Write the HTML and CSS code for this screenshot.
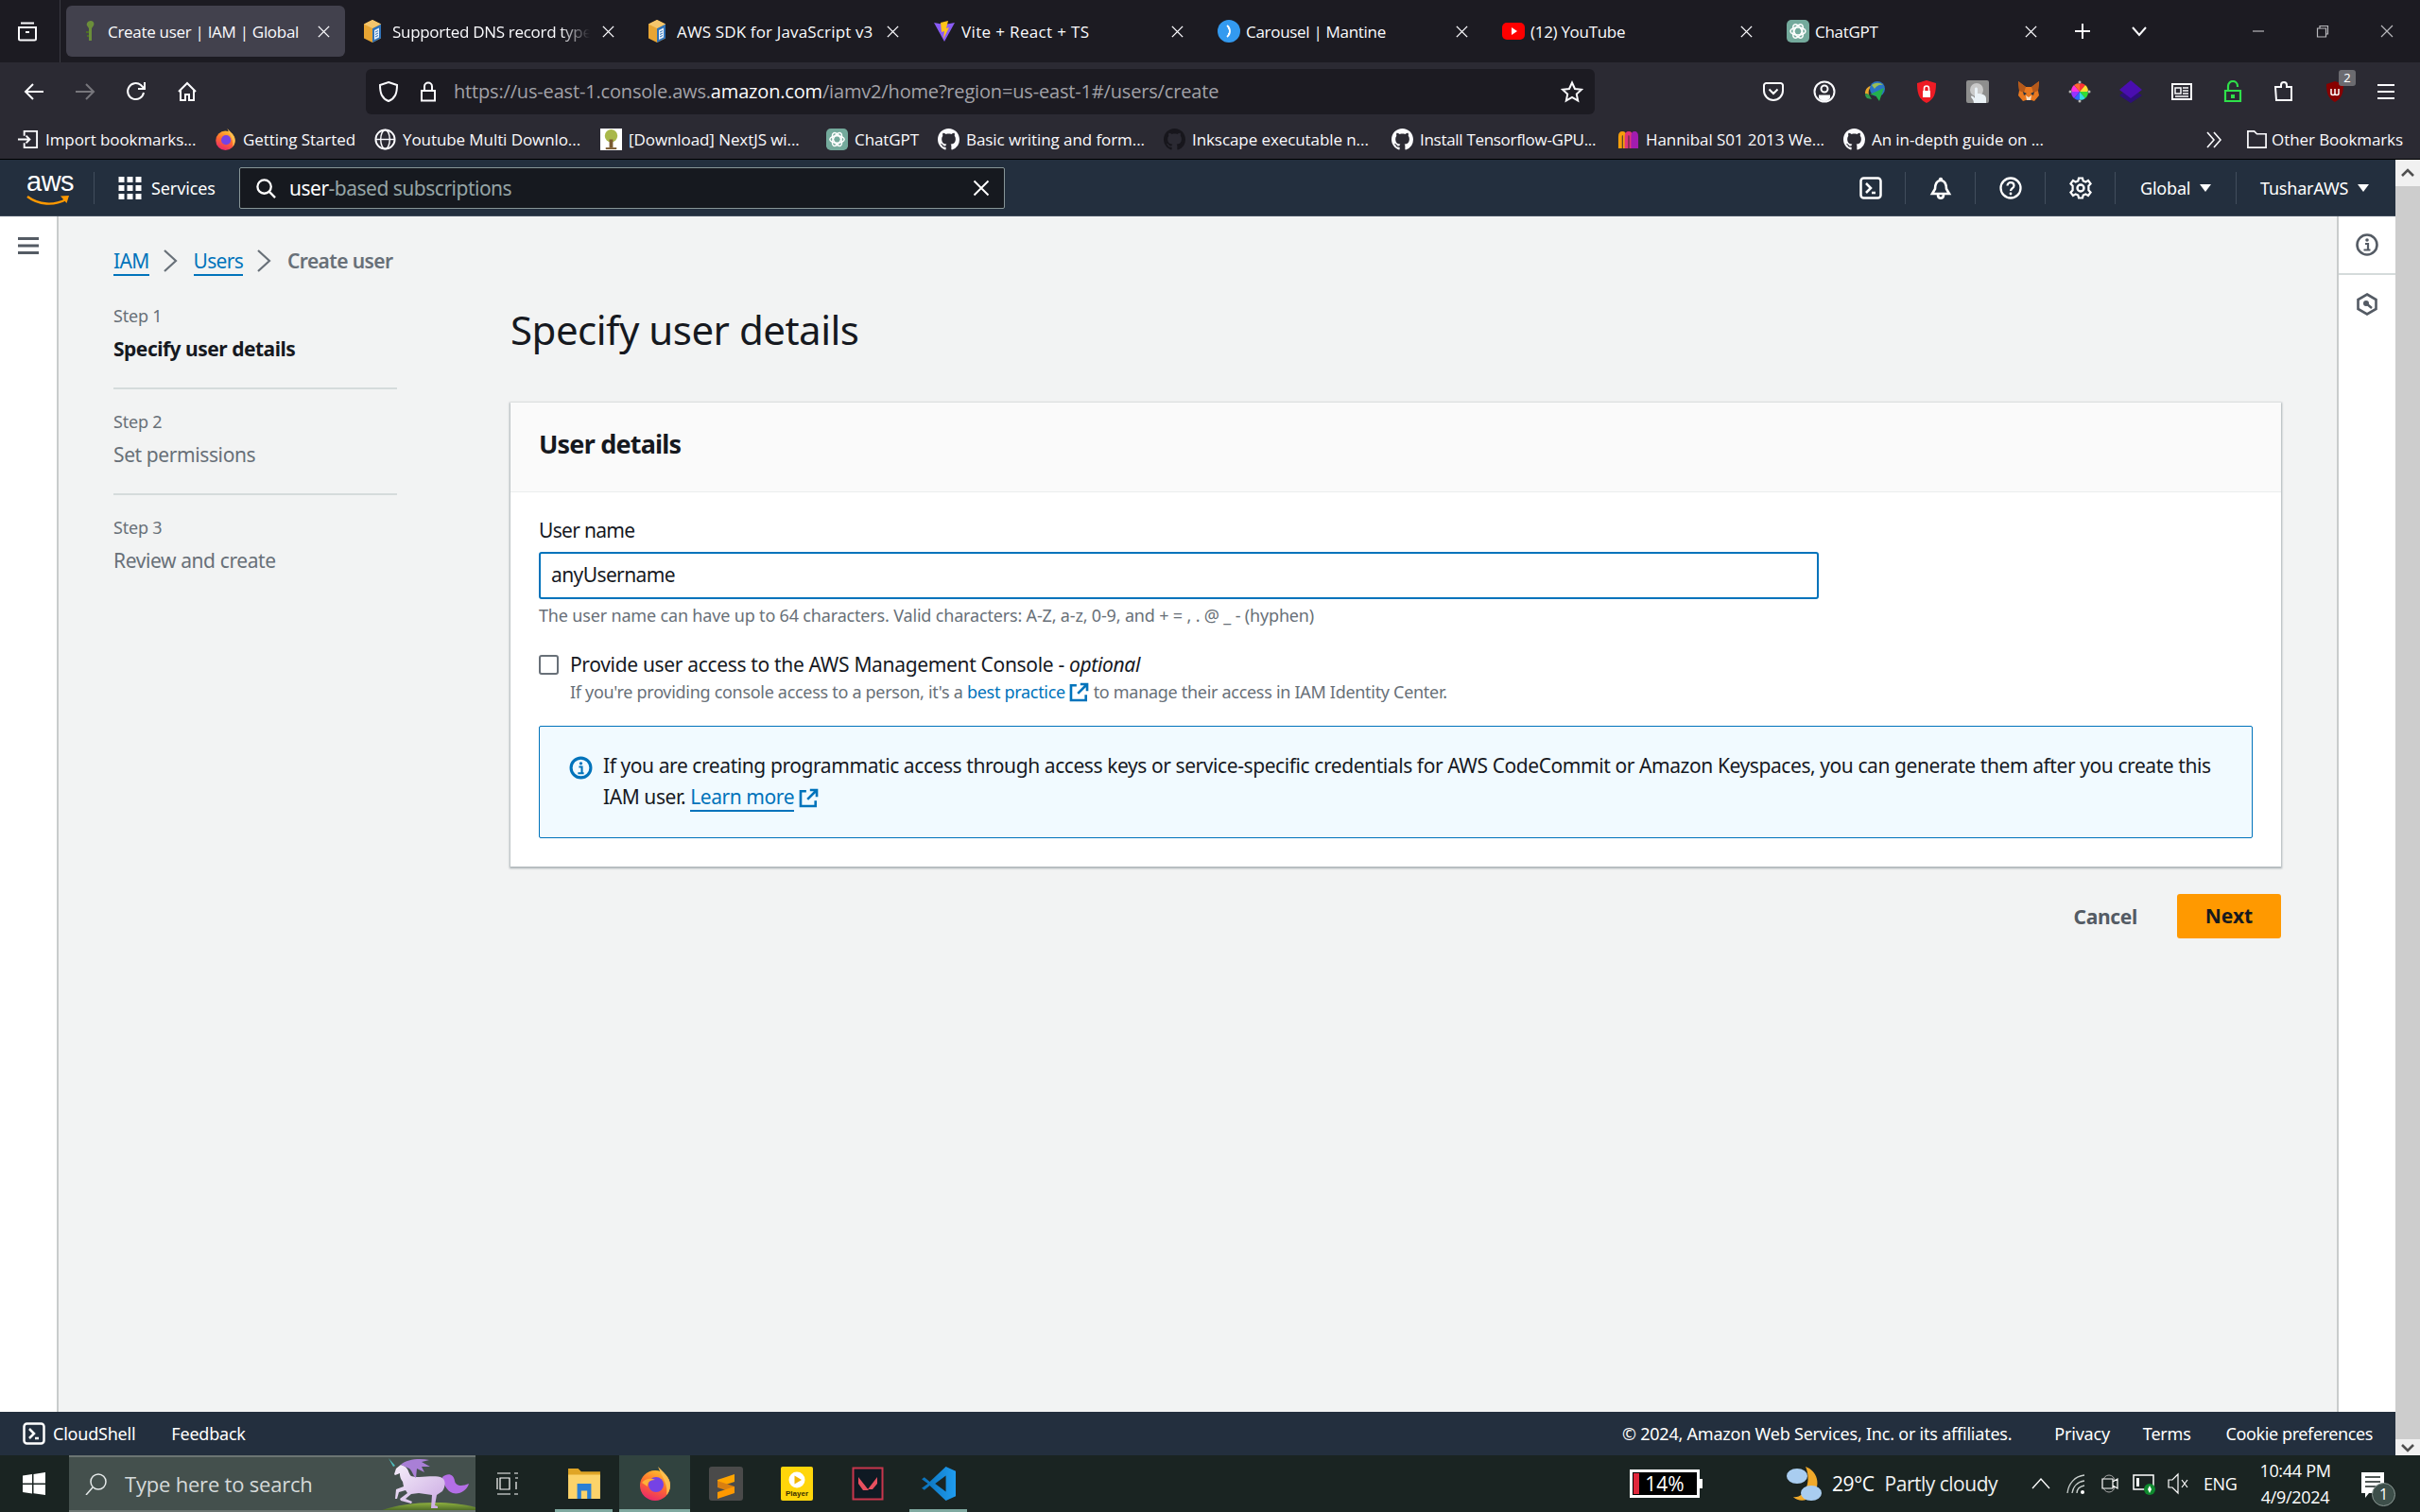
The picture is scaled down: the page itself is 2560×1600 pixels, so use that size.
FILE: index.html
```html
<!DOCTYPE html>
<html lang="en">
<head>
<meta charset="utf-8">
<title>Create user | IAM | Global</title>
<link rel="stylesheet" href="styles.css">
</head>
<body>
<svg class="defs" aria-hidden="true">
  <defs>
    <linearGradient id="fxg" x1="0.7" y1="0" x2="0.3" y2="1"><stop offset="0" stop-color="#ffc02e"/><stop offset=".5" stop-color="#ff6a2f"/><stop offset="1" stop-color="#e8246e"/></linearGradient>
    <linearGradient id="hill" x1="0" y1="0" x2="0" y2="1"><stop offset="0" stop-color="#8fb23f"/><stop offset="1" stop-color="#3e5a22"/></linearGradient>
    <linearGradient id="uni" x1="0" y1="0" x2="1" y2="1"><stop offset="0" stop-color="#f6eefa"/><stop offset="1" stop-color="#c9a8e2"/></linearGradient>
    <linearGradient id="vs" x1="0" y1="0" x2="1" y2="0"><stop offset="0" stop-color="#0a70b8"/><stop offset="1" stop-color="#1f9cf0"/></linearGradient>
  </defs>
  <symbol id="x" viewBox="0 0 16 16"><path d="M2 2l12 12M14 2L2 14" fill="none" stroke="currentColor" stroke-width="1.5"/></symbol>
  <symbol id="box" viewBox="0 0 24 24"><path d="M12 0l9 4.500v15L12 24l-9-4.500v-15z" fill="#e8a533"/><path d="M12 9l9-4.500v15L12 24z" fill="#2f72b8"/><path d="M14 11l5-2.500v10L14 21z" fill="#e9f1fa"/><path d="M15 13l3-1.500M15 15.500l3-1.500M15 18l3-1.500" stroke="#2f72b8" stroke-width="1"/><path d="M12 0l9 4.500L12 9 3 4.500z" fill="#f5c66c"/></symbol>
  <symbol id="gpt" viewBox="0 0 24 24"><rect width="24" height="24" rx="5" fill="#74aa9c"/><g fill="none" stroke="#fff" stroke-width="1.5"><ellipse cx="12" cy="12" rx="8" ry="4"/><ellipse cx="12" cy="12" rx="8" ry="4" transform="rotate(60 12 12)"/><ellipse cx="12" cy="12" rx="8" ry="4" transform="rotate(120 12 12)"/></g></symbol>
  <symbol id="gh" viewBox="0 0 16 16"><path fill="currentColor" d="M8 0C3.58 0 0 3.58 0 8c0 3.54 2.29 6.53 5.47 7.59.4.07.55-.17.55-.38 0-.19-.01-.82-.01-1.49-2.01.37-2.53-.49-2.69-.94-.09-.23-.48-.94-.82-1.13-.28-.15-.68-.52-.01-.53.63-.01 1.08.58 1.23.82.72 1.21 1.87.87 2.33.66.07-.52.28-.87.51-1.07-1.78-.2-3.64-.89-3.64-3.95 0-.87.31-1.59.82-2.15-.08-.2-.36-1.02.08-2.12 0 0 .67-.21 2.2.82.64-.18 1.32-.27 2-.27s1.36.09 2 .27c1.53-1.04 2.2-.82 2.2-.82.44 1.1.16 1.92.08 2.12.51.56.82 1.27.82 2.15 0 3.07-1.87 3.75-3.65 3.95.29.25.54.73.54 1.48 0 1.07-.01 1.93-.01 2.2 0 .21.15.46.55.38A8.013 8.013 0 0 0 16 8c0-4.42-3.58-8-8-8z"/></symbol>
  <symbol id="ext" viewBox="0 0 16 16"><path d="M9 1.500h5.500V7M14.500 1.500L7 9M6 2.500H1.500v12h12V10" fill="none" stroke="currentColor" stroke-width="2"/></symbol>
  <symbol id="shell" viewBox="0 0 24 24"><rect x="1.500" y="1.500" width="21" height="21" rx="3" fill="none" stroke="currentColor" stroke-width="2.500"/><path d="M7 7l5 5-5 5M13 17h4" fill="none" stroke="currentColor" stroke-width="2.500"/></symbol>
  <symbol id="caret" viewBox="0 0 12 10"><path d="M0 1h12L6 9z" fill="currentColor"/></symbol>
  <symbol id="chev" viewBox="0 0 16 24"><path d="M2 1l12 11L2 23" fill="none" stroke="#687078" stroke-width="2.200"/></symbol>
</svg>

<div class="screen">
  <header class="tabstrip">
    <div class="tabs-menu"><svg class="ico24" viewBox="0 0 24 24"><path d="M5 3.500h14M3 8h18v12a1.500 1.500 0 0 1-1.500 1.500h-15A1.500 1.500 0 0 1 3 20zM10 13h4" fill="none" stroke="#fbfbfe" stroke-width="2"/></svg></div>
    <div class="tab active">
      <svg class="ico24" viewBox="0 0 24 24"><path d="M12 1c3 0 4 3 3 5l-2 3v13h-3V9L8 6c-1-2 1-5 4-5z" fill="#6b8e3a"/><path d="M10 13h-3M10 17H8" stroke="#4c6d24" stroke-width="2"/></svg>
      <span class="tab-title">Create user | IAM | Global</span><svg class="tab-x"><use href="#x"/></svg>
    </div>
    <div class="tab">
      <svg class="ico24 shift-l"><use href="#box"/></svg>
      <span class="tab-title fade">Supported DNS record types</span><svg class="tab-x"><use href="#x"/></svg>
    </div>
    <div class="tab">
      <svg class="ico24 shift-l"><use href="#box"/></svg>
      <span class="tab-title loose">AWS SDK for JavaScript v3</span><svg class="tab-x"><use href="#x"/></svg>
    </div>
    <div class="tab">
      <svg class="ico24" viewBox="0 0 24 24"><path d="M1 3l11 2 11-2-11 20z" fill="#8a5cf6"/><path d="M8 3l8-2-2 8 3-1-6 12 1-8-3 1z" fill="#ffc517"/></svg>
      <span class="tab-title looser">Vite + React + TS</span><svg class="tab-x"><use href="#x"/></svg>
    </div>
    <div class="tab">
      <svg class="ico24" viewBox="0 0 24 24"><circle cx="12" cy="12" r="12" fill="#339af0"/><path d="M10 6c4 3 4 9 0 12M13 9h-2M13 15h-2" fill="none" stroke="#fff" stroke-width="1.800"/></svg>
      <span class="tab-title">Carousel | Mantine</span><svg class="tab-x"><use href="#x"/></svg>
    </div>
    <div class="tab">
      <svg class="ico24" viewBox="0 0 24 24"><rect y="3" width="24" height="18" rx="5" fill="#f00"/><path d="M10 8l6 4-6 4z" fill="#fff"/></svg>
      <span class="tab-title">(12) YouTube</span><svg class="tab-x"><use href="#x"/></svg>
    </div>
    <div class="tab">
      <svg class="ico24"><use href="#gpt"/></svg>
      <span class="tab-title">ChatGPT</span><svg class="tab-x"><use href="#x"/></svg>
    </div>
    <div class="tab-actions">
      <svg class="ico20" viewBox="0 0 20 20"><path d="M10 2v16M2 10h16" stroke="#fbfbfe" stroke-width="2"/></svg>
      <svg class="ico20" viewBox="0 0 20 20"><path d="M3 6l7 8 7-8" fill="none" stroke="#fbfbfe" stroke-width="2"/></svg>
    </div>
    <div class="win-buttons">
      <svg class="win-ico" viewBox="0 0 16 16"><path d="M2 8h12" stroke="#b9b9bd" stroke-width="1.200"/></svg>
      <svg class="win-ico" viewBox="0 0 16 16"><path d="M2.500 5h9v9h-9zM5 5V2.500h8.500V11H11.500" fill="none" stroke="#b9b9bd" stroke-width="1.200"/></svg>
      <svg class="win-ico" viewBox="0 0 16 16"><path d="M2 2l12 12M14 2L2 14" stroke="#b9b9bd" stroke-width="1.200"/></svg>
    </div>
  </header>

  <nav class="toolbar">
    <div class="tool"><svg class="ico24" viewBox="0 0 24 24"><path d="M22 12H3M11 4l-8 8 8 8" fill="none" stroke="#fbfbfe" stroke-width="2"/></svg></div>
    <div class="tool"><svg class="ico24" viewBox="0 0 24 24"><path d="M2 12h19M13 4l8 8-8 8" fill="none" stroke="#77767c" stroke-width="2"/></svg></div>
    <div class="tool"><svg class="ico24" viewBox="0 0 24 24"><path d="M20 13a8.500 8.500 0 1 1-3-8l3 3M21 2v7h-7" fill="none" stroke="#fbfbfe" stroke-width="2"/></svg></div>
    <div class="tool"><svg class="ico24" viewBox="0 0 24 24"><path d="M3 12l9-9 9 9M5 10v11h5v-6h4v6h5V10" fill="none" stroke="#fbfbfe" stroke-width="2"/></svg></div>
    <div class="urlbar">
      <svg class="ico24 shield" viewBox="0 0 24 24"><path d="M12 2l9 3c0 9-2 14-9 17C5 19 3 14 3 5z" fill="none" stroke="#fbfbfe" stroke-width="2"/></svg>
      <svg class="ico24 lock" viewBox="0 0 24 24"><path d="M5 11h14v10.500H5zM8 11V6.500a4 4 0 0 1 8 0V11" fill="none" stroke="#fbfbfe" stroke-width="2"/></svg>
      <span class="url">https://us-east-1.console.aws.<b>amazon.com</b>/iamv2/home?region=us-east-1#/users/create</span>
      <svg class="ico24 star" viewBox="0 0 24 24"><path d="M12 2.500l3 6.500 7 .8-5.200 4.800 1.400 7L12 18l-6.200 3.600 1.400-7L2 9.800 9 9z" fill="none" stroke="#fbfbfe" stroke-width="2"/></svg>
    </div>
    <div class="extensions">
      <div class="tool"><svg class="ico24" viewBox="0 0 24 24"><path d="M4 3h16a2.500 2.500 0 0 1 2 2v6a10 10 0 0 1-20 0V5a2.500 2.500 0 0 1 2-2zM7.500 9.500L12 14l4.500-4.500" fill="none" stroke="#fbfbfe" stroke-width="2"/></svg></div>
      <div class="tool"><svg class="ico24" viewBox="0 0 24 24"><circle cx="12" cy="12" r="10.500" fill="none" stroke="#fbfbfe" stroke-width="2"/><circle cx="12" cy="9" r="3.500" fill="none" stroke="#fbfbfe" stroke-width="2"/><path d="M6 15.500h12v3a7 7 0 0 1-12 0z" fill="#fbfbfe"/></svg></div>
      <div class="tool"><svg class="ico24" viewBox="0 0 24 24"><path d="M1 14c0-6 5-9 9-8-4 1-6 4-5 9z" fill="#e8a52a"/><path d="M3 19c-2-2-2-4-2-5l4 1 3 5z" fill="#2f9b4c"/><circle cx="14" cy="9" r="8" fill="#2a74c4"/><path d="M8 5c4-3 9-3 12 0-4-1-7 1-9 4z" fill="#9bbf55"/><path d="M21 8l-5 14-4-6-6-1z" fill="#23b14d"/></svg></div>
      <div class="tool"><svg class="ico24" viewBox="0 0 24 24"><path d="M12 0l10 3c0 11-2 17-10 21C4 20 2 14 2 3z" fill="#ee1c25"/><path d="M8 11h8v7H8z" fill="#fff"/><path d="M9.500 11V8.500a2.500 2.500 0 0 1 5 0V11" fill="none" stroke="#fff" stroke-width="1.600"/></svg></div>
      <div class="tool"><svg class="ico24" viewBox="0 0 24 24"><rect width="24" height="24" rx="2" fill="#8e8e8e"/><circle cx="11" cy="10" r="7" fill="#c9c9c9"/><path d="M8 24c0-4-3-5-3-7 1-1 3 0 4 2V9c0-2 3-2 3 0v5c4 0 9 1 9 5v5z" fill="#eaf1f6"/></svg></div>
      <div class="tool"><svg class="ico24" viewBox="0 0 24 24"><path d="M1 1l8 6h6l8-6-1 10 1 5-5 6-3-1h-6l-3 1-5-6 1-5z" fill="#e8781f"/><path d="M1 1l8 6-2 6-5-2zM23 1l-8 6 2 6 5-2z" fill="#b5591a"/><path d="M9 16l3 2 3-2-1 5h-4z" fill="#f5e0c8"/><path d="M6 12l4 2-3 2zM18 12l-4 2 3 2z" fill="#233447"/></svg></div>
      <div class="tool"><svg class="ico24" viewBox="0 0 24 24"><path d="M12 12V3a9 9 0 0 1 6 2z" fill="#f33"/><path d="M12 12l6-7a9 9 0 0 1 3 7z" fill="#fd3"/><path d="M12 12h9a9 9 0 0 1-3 7z" fill="#3d3"/><path d="M12 12l6 7a9 9 0 0 1-6 2z" fill="#3dd"/><path d="M12 12v9a9 9 0 0 1-6-2z" fill="#36f"/><path d="M12 12l-6 7a9 9 0 0 1-3-7z" fill="#93f"/><path d="M12 12H3a9 9 0 0 1 3-7z" fill="#f3d"/><path d="M12 12L6 5a9 9 0 0 1 6-2z" fill="#f63"/><g fill="#cfcfcf" stroke="#555" stroke-width=".6"><circle cx="12" cy="2" r="1.500"/><circle cx="12" cy="22" r="1.500"/><circle cx="2" cy="12" r="1.500"/><circle cx="22" cy="12" r="1.500"/></g></svg></div>
      <div class="tool"><svg class="ico24" viewBox="0 0 24 24"><path d="M12 24l-12-8 4-3 8 5 8-5 4 3z" fill="#2d0f78"/><path d="M12 0l12 10-12 9L0 10z" fill="#4a0eb0"/></svg></div>
      <div class="tool"><svg class="ico24" viewBox="0 0 24 24"><path d="M2 4h20v16H2z" fill="none" stroke="#fbfbfe" stroke-width="2"/><path d="M5 8h6v6H5zM13 8h6M13 11h6M13 14h6M5 17h14" fill="none" stroke="#fbfbfe" stroke-width="1.500"/></svg></div>
      <div class="tool"><svg class="ico24" viewBox="0 0 24 24"><path d="M4 11h16v11H4zM7 11V6a5 5 0 0 1 10 0v1" fill="none" stroke="#2fe04a" stroke-width="2.200"/><path d="M10 15h4v4h-4z" fill="#2fe04a"/></svg></div>
      <div class="tool"><svg class="ico24" viewBox="0 0 24 24"><path d="M3 7h6V5a3 3 0 0 1 6 0v2h5v14H4z" fill="none" stroke="#fbfbfe" stroke-width="2"/></svg></div>
      <div class="tool badge-host"><svg class="ico24" viewBox="0 0 24 24"><path d="M12 1l9 3c0 10-2 15-9 19C5 19 3 14 3 4z" fill="#800"/><path d="M8 9v5c0 2 4 2 4 0 0 2 4 2 4 0V9M12 9v5" fill="none" stroke="#fff" stroke-width="1.500"/></svg><span class="ext-badge">2</span></div>
      <div class="tool"><svg class="ico24" viewBox="0 0 24 24"><path d="M3 5h18M3 12h18M3 19h18" stroke="#fbfbfe" stroke-width="2"/></svg></div>
    </div>
  </nav>

  <div class="bookmarks">
    <div class="bm"><svg class="ico22" viewBox="0 0 24 24"><path d="M8 8V3h14v18H8v-5M1 12h13M10 8l4 4-4 4" fill="none" stroke="#fbfbfe" stroke-width="2"/></svg><span class="bm-t w160">Import bookmarks...</span></div>
    <div class="bm"><svg class="ico22" viewBox="0 0 34 36"><circle cx="17" cy="20" r="16" fill="url(#fxg)"/><path d="M20 0c6 6 13 12 13 20 0 4-2 8-4 10 2-10-3-16-9-30z" fill="#ffbd4f"/><circle cx="18" cy="19" r="8" fill="#7542e5"/></svg><span class="bm-t w120">Getting Started</span></div>
    <div class="bm"><svg class="ico22" viewBox="0 0 24 24"><circle cx="12" cy="12" r="10.500" fill="none" stroke="#fbfbfe" stroke-width="2"/><ellipse cx="12" cy="12" rx="5" ry="10.500" fill="none" stroke="#fbfbfe" stroke-width="1.500"/><path d="M2 12h20" stroke="#fbfbfe" stroke-width="1.500"/></svg><span class="bm-t w190">Youtube Multi Downlo...</span></div>
    <div class="bm"><svg class="ico22" viewBox="0 0 24 24"><rect width="24" height="24" fill="#fff"/><circle cx="12" cy="8" r="7" fill="#a9b84a"/><path d="M10 12h4v9h-4z" fill="#7a5a30"/><path d="M6 21h12v2H6z" fill="#7a5a30"/></svg><span class="bm-t w190">[Download] NextJS wi...</span></div>
    <div class="bm"><svg class="ico22"><use href="#gpt"/></svg><span class="bm-t w69">ChatGPT</span></div>
    <div class="bm"><svg class="ico22 gh-light"><use href="#gh"/></svg><span class="bm-t w190">Basic writing and form...</span></div>
    <div class="bm"><svg class="ico22 gh-dark"><use href="#gh"/></svg><span class="bm-t w192">Inkscape executable n...</span></div>
    <div class="bm"><svg class="ico22 gh-light"><use href="#gh"/></svg><span class="bm-t w190 tight">Install Tensorflow-GPU...</span></div>
    <div class="bm"><svg class="ico22" viewBox="0 0 24 24"><path d="M3 22V9c0-5 5-5 5 0v13" fill="none" stroke="#f59e0b" stroke-width="4"/><path d="M10 22V9c0-5 5-5 5 0v13" fill="none" stroke="#e0337a" stroke-width="4"/><path d="M17 22V9c0-5 4-5 4 0v13" fill="none" stroke="#a21caf" stroke-width="4"/></svg><span class="bm-t w190">Hannibal S01 2013 We...</span></div>
    <div class="bm"><svg class="ico22 gh-light"><use href="#gh"/></svg><span class="bm-t w190">An in-depth guide on ...</span></div>
    <div class="bm-end">
      <svg class="ico20" viewBox="0 0 20 20"><path d="M3 2l7 8-7 8M10 2l7 8-7 8" fill="none" stroke="#fbfbfe" stroke-width="1.600"/></svg>
      <div class="bm other"><svg class="ico22" viewBox="0 0 24 24"><path d="M2 3h7l3 3h10v15H2z" fill="none" stroke="#fbfbfe" stroke-width="1.800"/></svg><span>Other Bookmarks</span></div>
    </div>
  </div>

  <div class="viewport">
    <div class="console">
      <div class="awsnav">
        <div class="aws-logo"><span class="aws-word">aws</span><svg class="aws-smile" viewBox="0 0 46 12"><path d="M1 2c12 9 28 10 41 3" fill="none" stroke="#f90" stroke-width="2.400"/><path d="M36 1.500l9-.5-2.500 8z" fill="#f90"/></svg></div>
        <span class="nav-sep first"></span>
        <div class="services"><svg class="grid-ico" viewBox="0 0 24 24"><path fill="#fff" d="M0 0h6v6H0zM9 0h6v6H9zM18 0h6v6h-6zM0 9h6v6H0zM9 9h6v6H9zM18 9h6v6h-6zM0 18h6v6H0zM9 18h6v6H9zM18 18h6v6h-6z"/></svg><span>Services</span></div>
        <div class="aws-search">
          <svg class="ico22" viewBox="0 0 24 24"><circle cx="10" cy="10" r="7.500" fill="none" stroke="#fff" stroke-width="2.400"/><path d="M15 15l7 7" stroke="#fff" stroke-width="2.400"/></svg>
          <span class="search-text"><b>user</b>-based subscriptions</span>
          <svg class="search-x"><use href="#x"/></svg>
        </div>
        <div class="nav-right">
          <div class="nav-ico"><svg class="ico24"><use href="#shell"/></svg></div>
          <div class="nav-ico"><svg class="ico24" viewBox="0 0 24 24"><path d="M12 2c-1 0-1 1-1 2-4 1-5 5-5 9l-3 5h18l-3-5c0-4-1-8-5-9 0-1 0-2-1-2zM9 19c0 5 6 5 6 0" fill="none" stroke="#fff" stroke-width="2.600"/></svg></div>
          <div class="nav-ico"><svg class="ico24" viewBox="0 0 24 24"><circle cx="12" cy="12" r="10.500" fill="none" stroke="#fff" stroke-width="2.300"/><path d="M8.500 9.500c0-4.500 7-4.500 7 0 0 3-3.500 2.500-3.500 5.500" fill="none" stroke="#fff" stroke-width="2.200"/><circle cx="12" cy="18" r="1.400" fill="#fff"/></svg></div>
          <div class="nav-ico"><svg class="ico24" viewBox="0 0 24 24"><circle cx="12" cy="12" r="3.500" fill="none" stroke="#fff" stroke-width="2.400"/><path d="M10 1.500h4l.7 3 2.600 1.100 2.700-1.600 2.600 3.400-2.200 2.200v4.800l2.200 2.200-2.600 3.400-2.700-1.600-2.600 1.100-.7 3h-4l-.7-3-2.600-1.100L4 20l-2.600-3.400 2.200-2.200V9.600L1.400 7.400 4 4l2.700 1.600 2.600-1.100z" fill="none" stroke="#fff" stroke-width="2.200"/></svg></div>
          <div class="nav-menu global"><span>Global</span><svg class="caret"><use href="#caret"/></svg></div>
          <div class="nav-menu user"><span>TusharAWS</span><svg class="caret"><use href="#caret"/></svg></div>
        </div>
      </div>

      <div class="workspace">
        <aside class="left-rail">
          <svg class="burger" viewBox="0 0 22 18"><path d="M0 1.500h22M0 9h22M0 16.500h22" stroke="#545b64" stroke-width="3"/></svg>
        </aside>
        <main class="content">
          <div class="crumbs">
            <a class="crumb-link">IAM</a><svg class="crumb-chev"><use href="#chev"/></svg>
            <a class="crumb-link">Users</a><svg class="crumb-chev"><use href="#chev"/></svg>
            <span class="crumb-now">Create user</span>
          </div>
          <div class="wizard">
            <ol class="steps">
              <li class="step"><small>Step 1</small><strong>Specify user details</strong></li>
              <li class="step"><small>Step 2</small><span>Set permissions</span></li>
              <li class="step last"><small>Step 3</small><span>Review and create</span></li>
            </ol>
            <section class="form-col">
              <h1>Specify user details</h1>
              <div class="card">
                <div class="card-head"><h2>User details</h2></div>
                <div class="card-body">
                  <label class="field-label">User name</label>
                  <div class="input">anyUsername</div>
                  <p class="hint">The user name can have up to 64 characters. Valid characters: A-Z, a-z, 0-9, and + = , . @ _ - (hyphen)</p>
                  <div class="check-row">
                    <span class="checkbox"></span>
                    <div>
                      <div class="check-label">Provide user access to the AWS Management Console - <em>optional</em></div>
                      <div class="check-sub">If you're providing console access to a person, it's a <a class="sub-link">best practice</a> <svg class="ext"><use href="#ext"/></svg> to manage their access in IAM Identity Center.</div>
                    </div>
                  </div>
                  <div class="flash">
                    <svg class="flash-ico" viewBox="0 0 24 24"><circle cx="12" cy="12" r="10" fill="none" stroke="#0073bb" stroke-width="3"/><path d="M10 11h3v6M9 17.500h6" fill="none" stroke="#0073bb" stroke-width="2"/><circle cx="12" cy="7.500" r="1.600" fill="#0073bb"/></svg>
                    <p>If you are creating programmatic access through access keys or service-specific credentials for AWS CodeCommit or Amazon Keyspaces, you can generate them after you create this IAM user. <a class="learn">Learn more</a> <svg class="ext wide"><use href="#ext"/></svg></p>
                  </div>
                </div>
              </div>
              <div class="actions">
                <span class="cancel">Cancel</span>
                <span class="next">Next</span>
              </div>
            </section>
          </div>
        </main>
        <aside class="right-rail">
          <div class="rail-cell"><svg class="ico24" viewBox="0 0 24 24"><circle cx="12" cy="12" r="10.500" fill="none" stroke="#545b64" stroke-width="2.600"/><path d="M10 11h3v6M8.500 17.500h7" fill="none" stroke="#545b64" stroke-width="2.200"/><circle cx="12" cy="7" r="1.800" fill="#545b64"/></svg></div>
          <div class="rail-cell"><svg class="ico24" viewBox="0 0 24 24"><path d="M12 1.500l9.500 5.500v10L12 22.500 2.500 17V7z" fill="none" stroke="#545b64" stroke-width="2.600"/><circle cx="11" cy="11" r="3" fill="#545b64"/><path d="M11 11l6 5" stroke="#545b64" stroke-width="2.400"/></svg></div>
        </aside>
      </div>

      <footer class="aws-footer">
        <svg class="ico24"><use href="#shell"/></svg>
        <span class="foot-shell">CloudShell</span>
        <span class="foot-feedback">Feedback</span>
        <span class="foot-copy">© 2024, Amazon Web Services, Inc. or its affiliates.</span>
        <span class="foot-privacy">Privacy</span>
        <span class="foot-terms">Terms</span>
        <span class="foot-cookie">Cookie preferences</span>
      </footer>
    </div>
    <div class="scrollbar">
      <div class="sb-btn top"><svg class="sb-ico" viewBox="0 0 16 10"><path d="M2 8l6-6 6 6" fill="none" stroke="#505050" stroke-width="2.600"/></svg></div>
      <div class="sb-btn bottom"><svg class="sb-ico" viewBox="0 0 16 10"><path d="M2 2l6 6 6-6" fill="none" stroke="#505050" stroke-width="2.600"/></svg></div>
    </div>
  </div>

  <div class="taskbar">
    <svg class="win-logo" viewBox="0 0 24 24"><path fill="#fff" d="M0 3.500l10-1.400V11.500H0zM11.500 1.900L24 0v11.500H11.500zM0 13h10v9.400L0 21zM11.500 13H24v11l-12.500-1.800z"/></svg>
    <div class="task-search">
      <svg class="ico24" viewBox="0 0 24 24"><circle cx="14" cy="10" r="8" fill="none" stroke="#e6eaea" stroke-width="1.500"/><path d="M8 16l-7 8" stroke="#e6eaea" stroke-width="1.500"/></svg>
      <span>Type here to search</span>
      <svg class="unicorn" viewBox="3 2 100 56">
        <path d="M0 60c20-10 70-14 103-5v5z" fill="url(#hill)"/>
        <path d="M11 3l7 8-2 1z" fill="#4fc0c0"/>
        <path d="M68 23c6-5 12-3 13 4 1 6 8 6 15 3-2 7-10 12-17 10-6-2-10-9-11-17z" fill="#b46fe6"/>
        <path d="M17 20l2-6 5-4 3 1c6 3 5 9 8 11 10 3 24-2 33 2 4 3 3 10 0 14l-6 4-2 11 3 1v2h-7l1-14-14-2-8 1-6 5 7 3-1 2-11-3-1-2 8-6-2-3-7 2-2 7h-2l1-10 8-3-1-5c-3-4-3-7-3-9l-5 2z" fill="url(#uni)"/>
        <path d="M24 10c6-6 20-7 30-5l-8 2 9 5-9 0 3 6-8-4-1 10c-3-2-4-8-7-10z" fill="#a97fd6"/>
      </svg>
    </div>
    <div class="task-apps">
      <div class="task-app viewer"><svg class="ico24" viewBox="0 0 24 24"><path d="M1 1h14M1 23h14M4 6h10v12H4zM1 6v12M19 1h4M19 23h4M20 6h3M21 10v8" fill="none" stroke="#fff" stroke-width="1.200"/></svg></div>
      <div class="task-app running"><svg class="app-ico" viewBox="0 0 32 34"><path d="M0 2h10l3 3h19v6H0z" fill="#e0a526"/><path d="M0 8h32v24H0z" fill="#fcd36a"/><path d="M9 32V17h14v15h-4v-8h-6v8z" fill="#2a7fd5"/></svg></div>
      <div class="task-app selected"><svg class="app-ico" viewBox="0 0 34 36"><circle cx="17" cy="20" r="16" fill="url(#fxg)"/><path d="M20 0c6 6 13 12 13 20 0 4-2 8-4 10 2-10-3-16-9-30z" fill="#ffbd4f"/><circle cx="18" cy="19" r="8" fill="#7542e5"/><path d="M3 17c4-5 10-5 14-3-6 0-8 3-8 7z" fill="#ffb03a"/></svg></div>
      <div class="task-app"><svg class="app-big" viewBox="0 0 36 36"><rect width="36" height="36" rx="3" fill="#4a4a4a"/><path d="M27 8L9 14v8l18-6z" fill="#ffa500"/><path d="M9 15l18 6v7L9 22z" fill="#d97f10"/><path d="M27 21L9 27v7l18-6z" fill="#ff9800"/></svg></div>
      <div class="task-app"><svg class="app-big" viewBox="0 0 36 36"><rect x="1" width="34" height="36" rx="2" fill="#ffd60a"/><circle cx="18" cy="14" r="8.500" fill="#fff"/><path d="M15.500 9.500l7.500 4.500-7.500 4.500z" fill="#f2b705"/><text class="player-word" x="18" y="31" text-anchor="middle">Player</text></svg></div>
      <div class="task-app"><svg class="app-big" viewBox="0 0 34 36"><path d="M1.500 1.500h31v33h-31z" fill="#0f1923" stroke="#c8364c" stroke-width="2"/><path d="M7 11l11 14h-6L7 18zM27 11v7l-5 6h-5z" fill="#e8505f"/></svg></div>
      <div class="task-app running"><svg class="app-big" viewBox="0 0 38 38"><path d="M27 0l11 5v28l-11 5L9 21l-6 5-3-2 7-5-7-5 3-2 6 5z" fill="url(#vs)"/><path d="M27 10L15 19l12 9z" fill="#1a2422"/></svg></div>
    </div>
    <div class="tray">
      <div class="battery"><span class="batt-level"></span><span class="batt-text">14%</span></div>
      <svg class="weather" viewBox="0 0 38 40"><path d="M20 2c12 4 18 20 6 32-6 5-14 5-19 0 12 2 20-16 13-32z" fill="#f0a92a"/><ellipse cx="11" cy="12" rx="11" ry="8" fill="#a9cdf0"/><ellipse cx="26" cy="30" rx="11" ry="8" fill="#a9cdf0"/></svg>
      <span class="temp">29°C</span><span class="cond">Partly cloudy</span>
      <svg class="tray-ico caret-up" viewBox="0 0 20 14"><path d="M1 12l9-10 9 10" fill="none" stroke="#fff" stroke-width="1.300"/></svg>
      <svg class="tray-ico wifi" viewBox="0 0 20 24"><path d="M1 22C2 12 9 4 19 3M6 22c1-7 6-12 13-13M11 22c0-4 3-7 8-8" fill="none" stroke="#c9cfcd" stroke-width="1.300"/><circle cx="17" cy="21" r="2" fill="#fff"/></svg>
      <svg class="tray-ico meet" viewBox="0 0 18 26"><rect x="2" y="4" width="12" height="18" rx="6" fill="none" stroke="#aaa" stroke-width="1"/><path d="M1 8h11v10H1zM12 11l5-3v10l-5-3" fill="#1a2422" stroke="#fff" stroke-width="1.200"/></svg>
      <div class="power"><svg class="tray-ico power-ico" viewBox="0 0 24 24"><path d="M1 3h21v15H1z" fill="none" stroke="#fff" stroke-width="1.500"/><path d="M4 6h3v9H4z" fill="#fff"/><circle cx="18" cy="18" r="6" fill="#0f8a2e"/><path d="M18 14v8M16 18l2-4 2 4-2 4z" fill="#fff"/></svg></div>
      <svg class="tray-ico vol" viewBox="0 0 22 24"><path d="M1 8h4l6-6v20l-6-6H1z" fill="none" stroke="#fff" stroke-width="1.200"/><path d="M15 8l6 8M21 8l-6 8" stroke="#fff" stroke-width="1.200"/></svg>
      <span class="lang">ENG</span>
      <div class="clock"><span>10:44 PM</span><span>4/9/2024</span></div>
      <div class="notif"><svg class="notif-ico" viewBox="0 0 26 30"><path d="M1 1h24v22H9l-4 5v-5H1z" fill="#fff"/><path d="M5 6h16M5 11h16M5 16h12" stroke="#1a2422" stroke-width="1.500"/></svg><span class="notif-count">1</span></div>
    </div>
  </div>
</div>
</body>
</html>
```
FILE: styles.css
```css
* { box-sizing: border-box; }
html, body { margin: 0; padding: 0; background: #1c1b22; }
.defs { display: block; width: 0; height: 0; overflow: hidden; }
.screen { width: 2560px; height: 1600px; display: flex; flex-direction: column; overflow: hidden; font-family: "Noto Sans", sans-serif; color: #16191f; }
.ico24 { width: 24px; height: 24px; flex: none; display: block; }
.ico22 { width: 23px; height: 23px; flex: none; display: block; }
.ico20 { width: 20px; height: 20px; flex: none; display: block; }

/* Tabs */
.tabstrip { height: 66px; background: #1c1b22; display: flex; align-items: center; color: #fbfbfe; flex: none; }
.tabs-menu { width: 64px; height: 66px; padding-left: 17px; display: flex; align-items: center; border-right: 1px solid #3a3a42; margin-right: 6px; }
.tab { width: 295px; height: 54px; margin-right: 6px; padding-left: 14px; border-radius: 6px; display: flex; align-items: center; flex: none; position: relative; }
.tab.active { background: #42414d; }
.shift-l { margin-left: -3px; margin-right: 3px; }
.tab-title { margin-left: 6px; width: 209px; white-space: nowrap; overflow: hidden; font-family: "Open Sans", sans-serif; font-size: 17px; letter-spacing: -0.3px; }
.tab-title.loose { letter-spacing: 0.15px; }
.tab-title.looser { letter-spacing: 0.35px; }
.tab-title.fade { -webkit-mask-image: linear-gradient(90deg, #000 85%, transparent); mask-image: linear-gradient(90deg, #000 85%, transparent); }
.tab-x { width: 15px; height: 15px; margin-left: 12px; flex: none; color: #fbfbfe; }
.tab-actions { display: flex; gap: 40px; margin-left: 16px; }
.win-buttons { display: flex; margin-left: auto; margin-right: 27px; gap: 52px; }
.win-ico { width: 16px; height: 16px; }

/* Toolbar */
.toolbar { height: 61px; background: #2b2a33; display: flex; align-items: center; padding-left: 9px; flex: none; }
.tool { width: 54px; height: 48px; display: flex; align-items: center; justify-content: center; flex: none; position: relative; }
.urlbar { width: 1300px; height: 48px; margin-left: 162px; background: #1c1b22; border-radius: 6px; display: flex; align-items: center; padding-left: 12px; color: #fbfbfe; }
.shield { margin-right: 18px; }
.lock { margin-right: 15px; }
.url { font-family: "Open Sans", sans-serif; font-size: 20px; color: #a2a2a8; white-space: nowrap; letter-spacing: -0.17px; }
.url b { color: #fbfbfe; font-weight: 400; }
.star { margin-left: auto; margin-right: 12px; }
.extensions { display: flex; margin-left: 162px; }
.ext-badge { position: absolute; top: 1px; right: 5px; width: 18px; height: 17px; border-radius: 3px; background: #6b6b70; color: #fff; font-size: 13px; line-height: 17px; text-align: center; }

/* Bookmarks */
.bookmarks { height: 42px; background: #2b2a33; border-bottom: 1px solid #000; display: flex; align-items: center; padding-left: 18px; gap: 19px; color: #fbfbfe; flex: none; font-family: "Open Sans", sans-serif; font-size: 17px; letter-spacing: -0.08px; }
.bm { display: flex; align-items: center; gap: 7px; flex: none; white-space: nowrap; }
.bm-t { overflow: hidden; display: block; }
.bm-t.tight { letter-spacing: -0.3px; }
.w160 { width: 160px; }
.w120 { width: 120px; }
.w190 { width: 190px; }
.w192 { width: 192px; }
.w69 { width: 69px; }
.gh-light { color: #fbfbfe; }
.gh-dark { color: #17161c; }
.bm-end { display: flex; align-items: center; gap: 24px; margin-left: auto; padding-right: 18px; }
.other { gap: 4px; }

/* Console */
.viewport { flex: 1; display: flex; min-height: 0; }
.console { flex: 1; display: flex; flex-direction: column; min-width: 0; background: #f2f3f3; }
.scrollbar { width: 26px; background: #cdcdcd; display: flex; flex-direction: column; justify-content: space-between; flex: none; }
.sb-btn { background: #f1f1f1; display: flex; align-items: center; justify-content: center; }
.sb-btn.top { height: 28px; }
.sb-btn.bottom { height: 17px; }
.sb-ico { width: 16px; height: 10px; }

.awsnav { height: 60px; background: #232f3e; padding-top: 1px; border-bottom: 1px solid #3f4b5a; display: flex; align-items: center; color: #fff; flex: none; padding-left: 28px; }
.aws-logo { width: 45px; height: 40px; position: relative; flex: none; }
.aws-word { display: block; font-family: "Liberation Sans", sans-serif; font-size: 29px; line-height: 27px; text-align: center; color: #fff; letter-spacing: -0.5px; }
.aws-smile { width: 46px; height: 12px; display: block; }
.nav-sep.first { width: 1px; height: 34px; background: #414d5c; margin-left: 26px; margin-right: 25px; }
.services { display: flex; align-items: center; gap: 10px; width: 128px; font-size: 18px; letter-spacing: -0.1px; }
.grid-ico { width: 25px; height: 24px; flex: none; }
.aws-search { width: 810px; height: 44px; background: #16191f; border: 1px solid #879596; border-radius: 2px; display: flex; align-items: center; padding-left: 16px; padding-right: 14px; }
.search-text { margin-left: 13px; font-size: 21px; color: #95a5a6; letter-spacing: -0.5px; }
.search-text b { color: #fff; font-weight: 400; }
.search-x { width: 20px; height: 20px; margin-left: auto; color: #fff; }
.nav-right { margin-left: auto; display: flex; align-items: center; height: 34px; font-size: 18px; letter-spacing: -0.2px; }
.nav-ico { width: 74px; height: 34px; display: flex; align-items: center; justify-content: center; border-right: 1px solid #414d5c; }
.nav-menu { display: flex; align-items: center; gap: 10px; height: 34px; }
.global { width: 128px; padding-left: 26px; border-right: 1px solid #414d5c; }
.user { width: 168px; padding-left: 25px; }
.caret { width: 12px; height: 10px; color: #fff; flex: none; }

.workspace { flex: 1; display: flex; min-height: 0; }
.left-rail { width: 62px; background: #fff; border-right: 2px solid #c9cccc; padding: 22px 0 0 19px; flex: none; }
.burger { width: 22px; height: 18px; display: block; }
.content { flex: 1; padding: 30px 59px 0 58px; min-width: 0; }
.crumbs { display: flex; align-items: center; height: 34px; font-size: 21px; letter-spacing: -0.7px; }
.crumb-link { color: #0073bb; border-bottom: 2px solid #0073bb; line-height: 26px; height: 29px; margin-top: 3px; }
.crumb-chev { width: 16px; height: 24px; margin: 0 17px 0 14px; flex: none; }
.crumb-now { color: #687078; font-weight: 600; letter-spacing: -0.6px; }
.wizard { display: flex; }
.steps { list-style: none; margin: 0 120px 0 0; padding: 7px 0 0; width: 300px; flex: none; }
.step { height: 112px; padding-top: 22px; border-bottom: 2px solid #d5dbdb; display: flex; flex-direction: column; }
.step.last { border-bottom: 0; }
.step small { font-size: 18px; line-height: 24px; color: #687078; letter-spacing: -0.2px; }
.step strong { font-size: 21px; line-height: 30px; margin-top: 8px; font-weight: 700; color: #16191f; letter-spacing: -0.5px; }
.step span { font-size: 21px; line-height: 30px; margin-top: 8px; color: #687078; letter-spacing: -0.4px; }
.form-col { flex: 1; min-width: 0; }
h1 { margin: 0; font-size: 42px; font-weight: 400; line-height: 60px; padding-top: 26px; height: 133px; color: #16191f; letter-spacing: -0.5px; }
.card { background: #fff; box-shadow: 0 1px 2px 1px rgba(0,28,36,.3); }
.card-head { height: 95px; background: #fafafa; border-bottom: 1px solid #eaeded; padding: 24px 30px 0; }
h2 { margin: 0; font-size: 27px; line-height: 40px; font-weight: 700; letter-spacing: -0.8px; }
.card-body { padding: 24px 30px 30px; }
.field-label { display: block; font-size: 21px; line-height: 32px; height: 39px; letter-spacing: -0.7px; }
.input { width: 1354px; height: 50px; border: 2px solid #0073bb; border-radius: 3px; padding-left: 11px; font-size: 21px; line-height: 44px; letter-spacing: -0.6px; }
.hint { margin: 5px 0 0; font-size: 18px; line-height: 24px; color: #687078; letter-spacing: -0.17px; }
.check-row { display: flex; margin-top: 23px; }
.checkbox { width: 21px; height: 21px; border: 2px solid #687078; border-radius: 3px; background: #fff; margin: 7px 12px 0 0; flex: none; }
.check-label { font-size: 21px; line-height: 34px; letter-spacing: -0.33px; }
.check-sub { font-size: 18px; line-height: 24px; color: #687078; letter-spacing: -0.3px; }
.sub-link { color: #0073bb; }
.ext { width: 21px; height: 21px; color: #0073bb; vertical-align: -4px; }
.flash { margin-top: 24px; height: 119px; border: 1px solid #0073bb; border-radius: 2px; background: #f1faff; padding: 25px 31px 0 31px; display: flex; }
.flash-ico { width: 25px; height: 25px; margin: 6px 11px 0 0; flex: none; }
.flash p { margin: 0; font-size: 21px; line-height: 33px; letter-spacing: -0.42px; }
.learn { color: #0073bb; border-bottom: 2px solid #0073bb; }
.actions { display: flex; justify-content: flex-end; align-items: center; margin-top: 29px; gap: 42px; }
.cancel { font-size: 21px; font-weight: 700; color: #545b64; letter-spacing: -0.3px; }
.next { width: 110px; height: 47px; background: #f90; border-radius: 3px; font-size: 21px; font-weight: 700; line-height: 47px; text-align: center; color: #16191f; }
.right-rail { width: 62px; background: #fff; border-left: 2px solid #c9cccc; flex: none; }
.rail-cell { height: 62px; display: flex; align-items: center; justify-content: center; border-bottom: 2px solid #d5dbdb; }
.rail-cell + .rail-cell { border-bottom: 0; }

.aws-footer { height: 46px; background: #232f3e; color: #fff; display: flex; align-items: center; padding-left: 24px; font-size: 18px; letter-spacing: -0.22px; flex: none; }
.foot-shell { margin-left: 8px; }
.foot-feedback { margin-left: 38px; }
.foot-copy { margin-left: auto; }
.foot-privacy { margin-left: 45px; }
.foot-terms { margin-left: 35px; }
.foot-cookie { margin-left: 37px; margin-right: 24px; letter-spacing: -0.4px; }

/* Taskbar */
.taskbar { height: 60px; background: #1a2422; display: flex; align-items: stretch; flex: none; color: #fff; font-family: "Open Sans", sans-serif; }
.win-logo { width: 24px; height: 24px; margin: 18px 25px 0 24px; flex: none; }
.task-search { width: 430px; background: #44504d; border-top: 2px solid #6b7572; border-bottom: 2px solid #6b7572; display: flex; align-items: center; padding-left: 17px; color: #d5dada; font-size: 22px; position: relative; }
.task-search span { margin-left: 18px; letter-spacing: -0.2px; }
.unicorn { position: absolute; right: 0; bottom: 0; width: 100px; height: 56px; }
.player-word { font-family: "Liberation Sans", sans-serif; font-size: 8px; font-weight: 700; fill: #3a3200; }
.task-apps { display: flex; margin-left: 3px; }
.task-app { width: 75px; display: flex; align-items: center; justify-content: center; position: relative; flex: none; }
.task-app.viewer { width: 62px; margin-right: 12px; }
.task-app.running::after, .task-app.selected::after { content: ""; position: absolute; left: 7px; right: 7px; bottom: 0; height: 3px; background: #7fa9a0; }
.task-app.selected { background: #31433f; }
.task-app.selected::after { left: 0; right: 0; }
.app-ico { width: 34px; height: 36px; }
.app-big { width: 36px; height: 36px; }
.tray { margin-left: auto; display: flex; align-items: center; padding-right: 24px; }
.battery { width: 74px; height: 30px; border: 3px solid #fff; background: #000; position: relative; margin-right: 92px; text-align: center; font-size: 21px; line-height: 24px; }
.battery::after { content: ""; position: absolute; right: -6px; top: 7px; width: 3px; height: 10px; background: #fff; }
.batt-level { position: absolute; left: 1px; top: 1px; bottom: 1px; width: 6px; background: #e0283c; }
.batt-text { position: relative; }
.weather { width: 38px; height: 40px; margin-right: 10px; flex: none; }
.temp { font-size: 21px; letter-spacing: -0.4px; margin-right: 11px; }
.cond { font-size: 21px; letter-spacing: -0.5px; color: #eef0f0; margin-right: 36px; }
.tray-ico { flex: none; display: block; }
.caret-up { width: 20px; height: 14px; margin-right: 17px; }
.wifi { width: 20px; height: 24px; margin-right: 17px; }
.meet { width: 18px; height: 26px; margin-right: 15px; }
.power-ico { width: 24px; height: 24px; margin-right: 13px; }
.vol { width: 22px; height: 24px; margin-right: 16px; }
.lang { font-size: 18px; width: 34px; margin-right: 25px; letter-spacing: -0.4px; }
.clock { display: flex; flex-direction: column; align-items: center; font-size: 18px; line-height: 28px; width: 76px; margin-right: 31px; letter-spacing: -0.3px; }
.notif { width: 39px; height: 60px; position: relative; flex: none; }
.notif-ico { position: absolute; left: 0; top: 17px; width: 26px; height: 30px; }
.notif-count { position: absolute; left: 12px; top: 29px; width: 25px; height: 25px; border-radius: 50%; background: #3d4f4a; border: 1px solid #8a9793; font-size: 16px; line-height: 23px; text-align: center; }
```
